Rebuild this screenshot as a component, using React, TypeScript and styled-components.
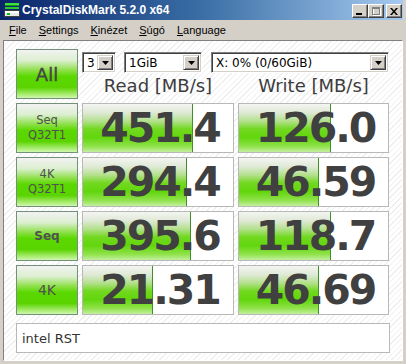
import { Fragment } from "react";
import styled, { createGlobalStyle } from "styled-components";

const GlobalStyle = createGlobalStyle`
  html, body {
    margin: 0;
    padding: 0;
    background: #ffffff;
  }
`;

const rows = [
  { label: ["Seq", "Q32T1"], kind: "small", read: "451.4", write: "126.0" },
  { label: ["4K", "Q32T1"], kind: "small", read: "294.4", write: "46.59" },
  { label: ["Seq"], kind: "bold", read: "395.6", write: "118.7" },
  { label: ["4K"], kind: "single", read: "21.31", write: "46.69" },
];

// CrystalDiskMark draws the bar on a log scale: 0.1 .. 10000 MB/s
const barWidth = (v: string) => {
  const p = ((Math.log10(parseFloat(v)) + 1) / 5) * 100;
  return Math.max(0, Math.min(100, p)) + "%";
};

const Window = styled.div`
  width: 406px;
  height: 364px;
  box-sizing: border-box;
  background: #d4d0c8;
  display: flex;
  flex-direction: column;
  font-family: "DejaVu Sans", sans-serif;
`;

const TitleBar = styled.div`
  height: 20px;
  margin-right: 3px;
  display: flex;
  align-items: center;
  padding-left: 4px;
  background: linear-gradient(to right, #0a246a 0%, #3a6ea5 50%, #a6caf0 100%);
`;

const TitleText = styled.span`
  flex: 1;
  margin-left: 2px;
  color: #ffffff;
  font-family: "Liberation Sans", Arial, sans-serif;
  font-weight: bold;
  font-size: 12px;
`;

const CaptionButtons = styled.div`
  display: flex;
  margin-right: 1px;
  margin-top: 2px;
`;

const CaptionButton = styled.div<{ $gapLeft?: boolean }>`
  width: 16px;
  height: 14px;
  box-sizing: border-box;
  margin-left: ${(p) => (p.$gapLeft ? "2px" : "0")};
  background: #d4d0c8;
  border-top: 1px solid #ffffff;
  border-left: 1px solid #ffffff;
  border-right: 1px solid #404040;
  border-bottom: 1px solid #404040;
  box-shadow: inset -1px -1px 0 #808080;
  display: flex;
  align-items: center;
  justify-content: center;
`;

const MenuBar = styled.div`
  height: 20px;
  display: flex;
  align-items: center;
  padding-left: 3px;
  font-family: "Liberation Sans", Arial, sans-serif;
  font-size: 11px;
  color: #000000;
`;

const MenuItem = styled.span`
  padding: 0 6px;
`;

const Client = styled.div`
  flex: 1;
  margin: 0 3px 3px 3px;
  box-sizing: border-box;
  border-top: 1px solid #808080;
  border-left: 1px solid #808080;
  border-right: 1px solid #ffffff;
  border-bottom: 1px solid #ffffff;
  padding: 8px 0 0 12px;
  background-color: #ffffff;
  background-image: repeating-linear-gradient(
    135deg,
    #ffffff 0px,
    #ffffff 3px,
    #efefef 3px,
    #efefef 4px
  );
`;

const Grid = styled.div`
  display: grid;
  grid-template-columns: 62px 152px 151px;
  column-gap: 4px;
  row-gap: 4px;
`;

const TopGrid = styled(Grid)`
  grid-template-rows: 24px 26px;
  row-gap: 0;
  margin-bottom: 4px;
`;

const labelSizes: Record<string, string> = {
  small: "11.5px",
  bold: "12px",
  single: "14px",
};

const GreenButton = styled.div<{ $kind: string }>`
  box-sizing: border-box;
  height: 50px;
  border: 1px solid #72907a;
  background: linear-gradient(
    to bottom,
    #f2f2f2 0%,
    #dcefd0 22%,
    #8ee04a 42%,
    #5ad800 55%,
    #5ad400 78%,
    #a6ec6c 92%,
    #d0f6b0 100%
  );
  display: flex;
  flex-direction: column;
  align-items: center;
  justify-content: center;
  color: #505050;
  font-size: ${(p) => labelSizes[p.$kind] ?? "11.5px"};
  font-weight: ${(p) => (p.$kind === "bold" ? "bold" : "normal")};
  line-height: 15px;
`;

const AllButton = styled(GreenButton)`
  grid-row: 1 / 3;
  font-size: 18px;
  color: #454545;
  -webkit-text-stroke: 0.4px #454545;
`;

const Selects = styled.div`
  grid-column: 2 / 4;
  display: flex;
  align-items: flex-end;
  gap: 8px;
`;

const Select = styled.div<{ $w: number; $ml?: number }>`
  width: ${(p) => p.$w}px;
  margin-left: ${(p) => p.$ml ?? 0}px;
  height: 21px;
  box-sizing: border-box;
  background: #ffffff;
  border-top: 1px solid #808080;
  border-left: 1px solid #808080;
  border-right: 1px solid #ffffff;
  border-bottom: 1px solid #ffffff;
  box-shadow: inset 1px 1px 0 #404040, inset -1px -1px 0 #d4d0c8;
  display: flex;
  align-items: center;
  padding: 2px;
  font-size: 12px;
  color: #000000;
`;

const SelectText = styled.span`
  flex: 1;
  padding-left: 2px;
  white-space: nowrap;
`;

const SelectArrow = styled.div`
  width: 16px;
  height: 15px;
  box-sizing: border-box;
  background: #d4d0c8;
  border-top: 1px solid #d4d0c8;
  border-left: 1px solid #d4d0c8;
  border-right: 1px solid #404040;
  border-bottom: 1px solid #404040;
  box-shadow: inset 1px 1px 0 #ffffff, inset -1px -1px 0 #808080;
  display: flex;
  align-items: center;
  justify-content: center;
`;

const Header = styled.div`
  text-align: center;
  font-size: 18px;
  line-height: 26px;
  color: #3c3c3c;
`;

const ValueBox = styled.div`
  box-sizing: border-box;
  height: 50px;
  border: 1px solid #b8b8b8;
  background: #ffffff;
  display: grid;
`;

const Bar = styled.div`
  grid-area: 1 / 1;
  justify-self: start;
  height: 100%;
  box-sizing: border-box;
  border-right: 1px solid #3f8f2a;
  background: linear-gradient(
    to bottom,
    #f4f5f2 0%,
    #dfe9d6 18%,
    #b2e08a 36%,
    #72d820 52%,
    #62d60c 70%,
    #8fe24a 88%,
    #c4efa0 100%
  );
`;

const Value = styled.div`
  grid-area: 1 / 1;
  place-self: center;
  padding-left: 4px;
  font-size: 41px;
  font-weight: bold;
  letter-spacing: -2px;
  color: #404040;
  line-height: 1;
`;

const Comment = styled.div`
  width: 374px;
  height: 30px;
  margin-top: 8px;
  box-sizing: border-box;
  border: 1px solid #b8b8b8;
  background: #ffffff;
  display: flex;
  align-items: center;
  padding-left: 5px;
  font-size: 13px;
  color: #333333;
`;

function AppIcon() {
  return (
    <svg width="16" height="16" viewBox="0 0 16 16">
      <rect x="1" y="1" width="14" height="2" fill="#3ee03e" />
      <rect x="1" y="3" width="14" height="1" fill="#169a16" />
      <rect x="1" y="5" width="14" height="2" fill="#2cc82c" />
      <rect x="0.5" y="8.5" width="15" height="6" fill="#e8e8e8" stroke="#404040" />
      <rect x="1" y="9" width="14" height="2" fill="#ffffff" />
      <rect x="3" y="11" width="3" height="2" fill="#18b818" />
    </svg>
  );
}

function SelectBox({ w, ml, text }: { w: number; ml?: number; text: string }) {
  return (
    <Select $w={w} $ml={ml}>
      <SelectText>{text}</SelectText>
      <SelectArrow>
        <svg width="7" height="4" viewBox="0 0 7 4">
          <path d="M0 0h7L3.5 4z" fill="#000" />
        </svg>
      </SelectArrow>
    </Select>
  );
}

export default function App() {
  return (
    <>
      <GlobalStyle />
      <Window>
        <TitleBar>
          <AppIcon />
          <TitleText>CrystalDiskMark 5.2.0 x64</TitleText>
          <CaptionButtons>
            <CaptionButton>
              <svg width="8" height="8" viewBox="0 0 8 8">
                <rect x="0" y="6" width="6" height="2" fill="#000" />
              </svg>
            </CaptionButton>
            <CaptionButton>
              <svg width="9" height="9" viewBox="0 0 9 9">
                <rect x="1.5" y="1.5" width="7" height="7" fill="none" stroke="#ffffff" />
                <rect x="0.5" y="0.5" width="7" height="7" fill="none" stroke="#808080" />
                <rect x="0.5" y="1" width="7" height="1" fill="#808080" />
              </svg>
            </CaptionButton>
            <CaptionButton $gapLeft>
              <svg width="8" height="7" viewBox="0 0 8 7">
                <path d="M0 0h2l2 2.5L6 0h2L5 3.5 8 7H6L4 4.5 2 7H0l3-3.5z" fill="#000" />
              </svg>
            </CaptionButton>
          </CaptionButtons>
        </TitleBar>
        <MenuBar>
          <MenuItem><u>F</u>ile</MenuItem>
          <MenuItem><u>S</u>ettings</MenuItem>
          <MenuItem><u>K</u>inézet</MenuItem>
          <MenuItem><u>S</u>úgó</MenuItem>
          <MenuItem><u>L</u>anguage</MenuItem>
        </MenuBar>
        <Client>
          <TopGrid>
            <AllButton $kind="all">All</AllButton>
            <Selects>
              <SelectBox w={34} text="3" />
              <SelectBox w={78} text="1GiB" />
              <SelectBox w={178} ml={1} text="X: 0% (0/60GiB)" />
            </Selects>
            <Header>Read [MB/s]</Header>
            <Header>Write [MB/s]</Header>
          </TopGrid>
          <Grid>
            {rows.map((r, i) => (
              <Fragment key={i}>
                <GreenButton $kind={r.kind}>
                  {r.label.map((t) => (
                    <span key={t}>{t}</span>
                  ))}
                </GreenButton>
                <ValueBox>
                  <Bar style={{ width: barWidth(r.read) }} />
                  <Value>{r.read}</Value>
                </ValueBox>
                <ValueBox>
                  <Bar style={{ width: barWidth(r.write) }} />
                  <Value>{r.write}</Value>
                </ValueBox>
              </Fragment>
            ))}
          </Grid>
          <Comment>intel RST</Comment>
        </Client>
      </Window>
    </>
  );
}
